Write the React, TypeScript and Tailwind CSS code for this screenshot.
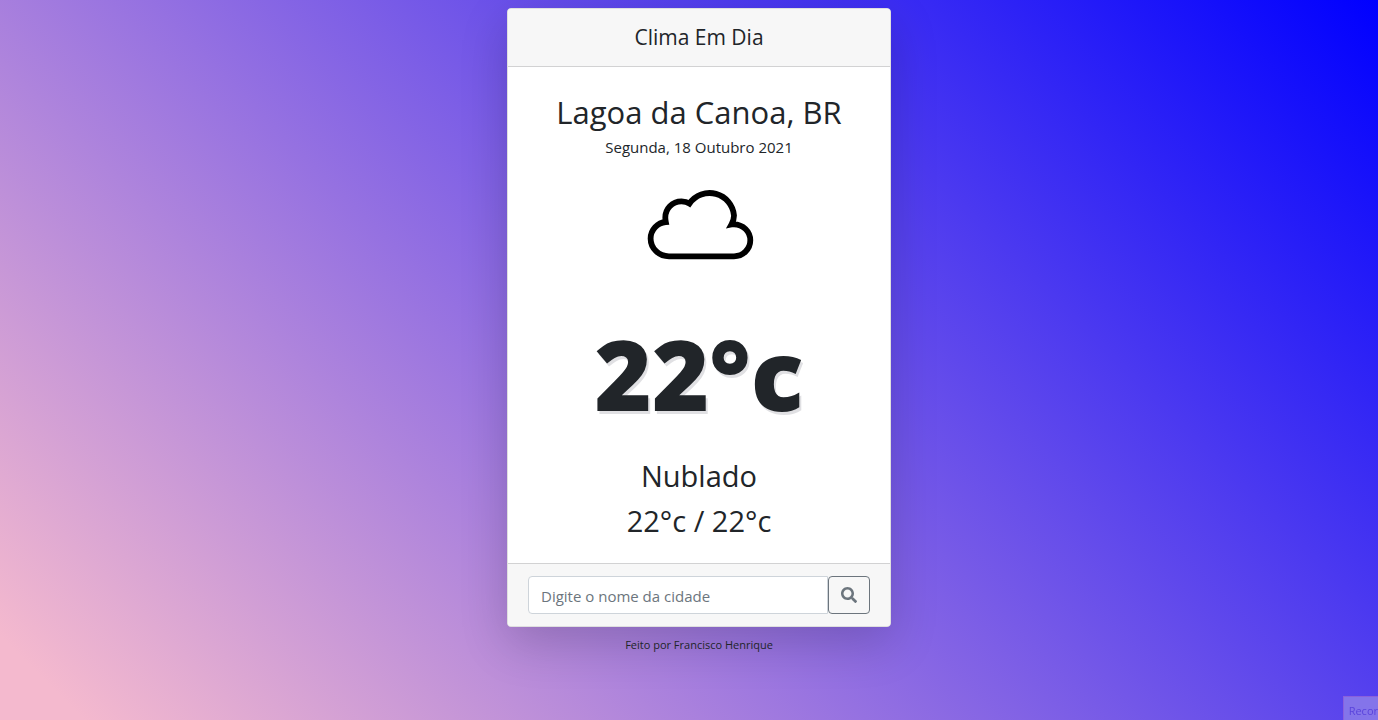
import { FaSearch } from "react-icons/fa";

function CloudIcon() {
  return (
    <svg
      viewBox="-4 0 112 72"
      className="h-[72px] w-28"
      fill="none"
      stroke="#000"
      strokeWidth="5.8"
      role="img"
      aria-label="Nublado"
    >
      <path d="M22 67.300H87A16.300 16 0 0 0 87 35.300Q85.500 35.300 84.500 35.500Q87 31 87 26.500A24.500 24.500 0 0 0 42.500 14.500C40 12.900 37.500 12.400 34.500 12.400C25 12.400 18.300 20 18.300 28.500Q18.300 30.500 18.800 33C10.500 33.500 3.600 41 3.600 49.500C3.600 59.500 12 67.300 22 67.300Z" />
    </svg>
  );
}

export default function App() {
  return (
    <div className="flex min-h-screen flex-col items-center overflow-hidden bg-[linear-gradient(45deg,#f4b9ce_4%,blue)] pt-2 pl-5 text-center font-['Open_Sans','Noto_Sans',sans-serif] text-[#212529]">
      <main className="w-full max-w-96 overflow-hidden rounded border border-[#dfdfdf] bg-white shadow-[0_16px_48px_rgba(0,0,0,0.175)]">
        <header className="border-b border-[#d2d2d3] bg-[#f7f7f7] px-5 py-3">
          <h1 className="text-[21px] leading-[33px]">Clima Em Dia</h1>
        </header>
        <section className="px-5 pt-6 pb-5">
          <h2 className="text-[31px] leading-[42px]">Lagoa da Canoa, BR</h2>
          <p className="pt-[2px] text-[15px] leading-6">Segunda, 18 Outubro 2021</p>
          <div className="flex justify-center pt-[30px] pb-10">
            <CloudIcon />
          </div>
          <p className="text-[98px] leading-[144px] font-extrabold [text-shadow:2px_3px_rgba(50,50,70,0.15)]">
            22°c
          </p>
          <p className="pt-2 text-[29px] leading-[45px]">Nublado</p>
          <p className="text-[29px] leading-[45px]">22°c / 22°c</p>
        </section>
        <footer className="border-t border-[#d2d2d3] bg-[#f7f7f7] px-5 py-3">
          <form className="flex" onSubmit={(event) => event.preventDefault()}>
            <input
              type="text"
              aria-label="Nome da cidade"
              placeholder="Digite o nome da cidade"
              className="h-[38px] min-w-0 flex-1 rounded-l border border-[#ced4da] bg-white px-3 pt-[2px] text-[15px] text-[#212529] placeholder:text-[#6c757d]"
            />
            <button
              type="submit"
              aria-label="Buscar"
              className="flex h-[38px] w-[42px] items-center justify-center rounded border border-[#6c757d] text-[#6c757d]"
            >
              <FaSearch className="size-4" />
            </button>
          </form>
        </footer>
      </main>
      <p className="pt-2 text-[11px] leading-5">Feito por Francisco Henrique</p>
      <div className="fixed right-0 bottom-0 h-6 border-t border-l border-[#8a60dc] bg-[#8474ea] pt-[6px] pl-[5px] text-left text-[11px] leading-4 text-[#5a43dc]">
        Recor
      </div>
    </div>
  );
}
